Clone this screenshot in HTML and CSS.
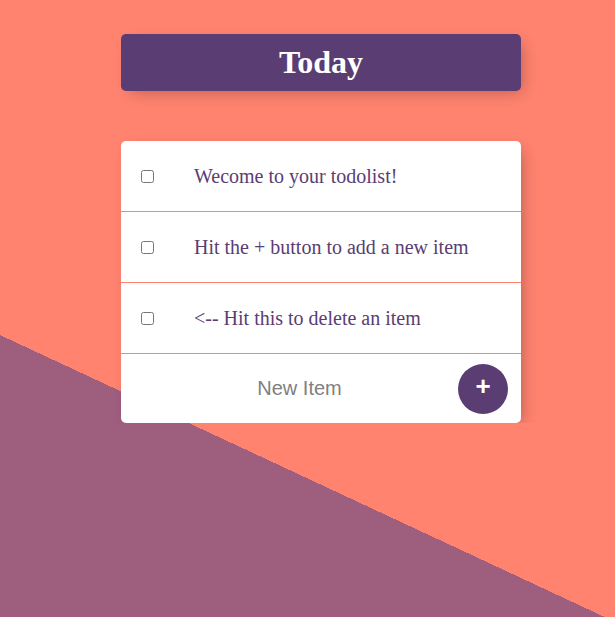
FILE: index.html
```html
<!DOCTYPE html>
<html lang="en">
<head>
<meta charset="utf-8">
<title>Today</title>
<link rel="stylesheet" href="styles.css">
</head>
<body>
  <div class="page">
    <div class="box heading">
      <h1 class="title">Today</h1>
    </div>
    <div class="box list">
      <div class="item">
        <input class="check" type="checkbox">
        <p class="text">Wecome to your todolist!</p>
      </div>
      <div class="item">
        <input class="check" type="checkbox">
        <p class="text">Hit the + button to add a new item</p>
      </div>
      <div class="item">
        <input class="check" type="checkbox">
        <p class="text">&lt;-- Hit this to delete an item</p>
      </div>
      <form class="item add-form">
        <input class="new-item" type="text" name="newItem" placeholder="New Item" autocomplete="off">
        <button class="add-btn" type="button">+</button>
      </form>
    </div>
  </div>
</body>
</html>
```
FILE: styles.css
```css
html {
  height: 100%;
  background-color: #ff836f;
  background-image: linear-gradient(25deg, #9e5e7d 31.2%, #ff836f 31.2%);
}

body {
  margin: 0;
  font-family: "Liberation Serif", "Times New Roman", serif;
}

.page {
  padding-top: 34px;
  padding-left: 27px;
  display: flex;
  flex-direction: column;
  align-items: center;
  gap: 50px;
}

.box {
  width: 400px;
  border-radius: 5px;
  box-shadow: 5px 5px 15px -5px rgba(0, 0, 0, 0.3);
}

.heading {
  background-color: #5a3d73;
  text-align: center;
}

.title {
  margin: 0;
  padding: 10px;
  color: #fff;
  font-size: 32px;
  font-weight: bold;
  line-height: 37px;
}

.list {
  background: #fff;
}

.item {
  min-height: 70px;
  display: flex;
  align-items: center;
  border-bottom: 1px solid #ff836f;
}

.item:last-child {
  border-bottom: 0;
  min-height: 69px;
}

.check {
  margin: 0 20px;
  width: 13px;
  height: 13px;
}

.text {
  margin: 0;
  padding: 20px;
  font-size: 20px;
  color: #5a3d73;
}

.add-form {
  padding-left: 20px;
}

.new-item {
  box-sizing: border-box;
  width: 317px;
  height: 60px;
  border: none;
  padding: 0;
  background: transparent;
  text-align: center;
  font-family: "Liberation Sans", Arial, sans-serif;
  font-size: 20px;
  outline: none;
}

.new-item::placeholder {
  color: grey;
  opacity: 1;
}

.add-btn {
  width: 50px;
  height: 50px;
  border: 0;
  border-radius: 50%;
  background-color: #5a3d73;
  color: #fff;
  font-family: "Liberation Sans", Arial, sans-serif;
  font-size: 26px;
  font-weight: bold;
  line-height: 1;
  padding: 0 0 6px;
}
```
